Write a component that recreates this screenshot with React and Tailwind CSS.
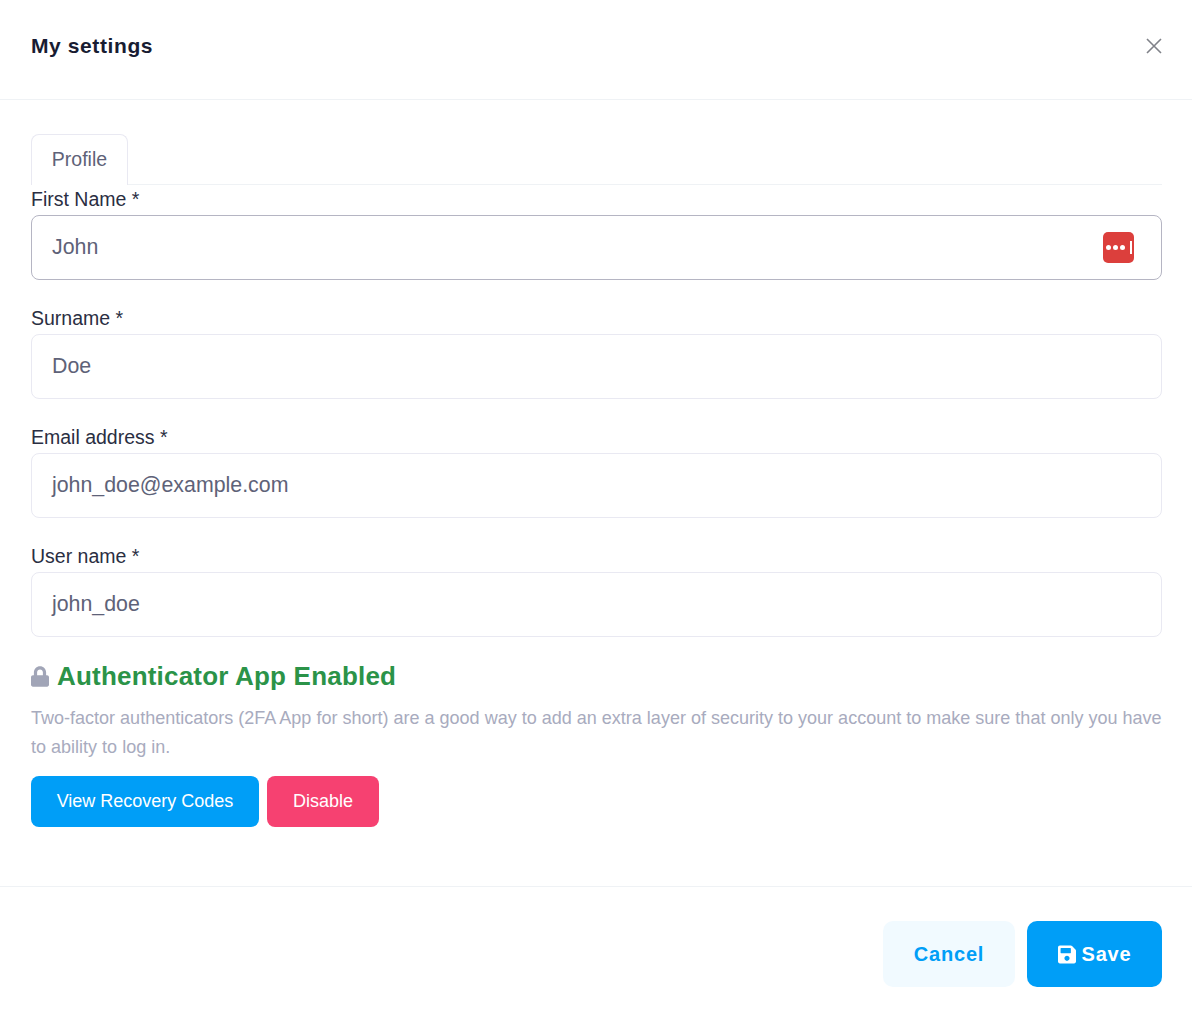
import { FaLock, FaSave } from "react-icons/fa";

const fields = [
  { label: "First Name *", value: "John", focused: true },
  { label: "Surname *", value: "Doe" },
  { label: "Email address *", value: "john_doe@example.com" },
  { label: "User name *", value: "john_doe" },
];

const Field = ({ label, value, focused }) => (
  <div className="mb-[24px] last:mb-[21px]">
    <label className="block h-[30px] text-[19.5px] leading-[28px] text-[#2a2e42]">
      {label}
    </label>
    <div
      className={`flex h-[65px] items-center justify-between rounded-lg border bg-white pr-[27px] pl-5 text-[21.35px] text-[#5e6278] ${
        focused ? "border-[#b5b5c3]" : "border-[#e9e9f2]"
      }`}
    >
      <span className="pb-px">{value}</span>
      {focused && (
        <span className="flex h-[31px] w-[31px] items-center justify-center gap-[2px] rounded-[5px] bg-[#dc3f3c]">
          <span className="h-[5px] w-[5px] rounded-full bg-white" />
          <span className="h-[5px] w-[5px] rounded-full bg-white" />
          <span className="h-[5px] w-[5px] rounded-full bg-white" />
          <span className="ml-[3px] h-[13px] w-[2px] bg-white" />
        </span>
      )}
    </div>
  </div>
);

const App = () => {
  return (
    <div className="h-[1020px] w-[1192px] overflow-hidden bg-white font-['Liberation_Sans',Arial,sans-serif]">
      <div className="flex h-[100px] items-center justify-between border-b border-[#eff2f5] pr-[29px] pb-[7px] pl-[31px]">
        <h2 className="text-[21px] font-bold tracking-[0.6px] text-[#181c32]">My settings</h2>
        <svg width="18" height="18" viewBox="0 0 18 18" fill="none" stroke="#808289" strokeWidth="1.6">
          <path d="M2 2 L16 16 M16 2 L2 16" />
        </svg>
      </div>

      <div className="h-[786px] px-[30px] pt-[34px] pl-[31px]">
        <div className="h-[51px] border-b border-[#eff2f5]">
          <div className="flex h-[51px] w-[97px] items-center justify-center rounded-t-lg border border-b-0 border-[#e9e9f2] bg-white pb-px text-[19.5px] text-[#5e6278]">
            Profile
          </div>
        </div>

        <div>
          {fields.map((f) => (
            <Field key={f.label} {...f} />
          ))}
        </div>

        <div className="flex h-[36px] items-center gap-[8px]">
          <FaLock className="h-[21px] w-[18px] text-[#a1a5b7]" />
          <h3 className="text-[26px] font-bold tracking-[0.2px] text-[#2b9348]">Authenticator App Enabled</h3>
        </div>
        <p className="mt-[10px] text-[18.03px] leading-[29px] text-[#a8abbe]">
          Two-factor authenticators (2FA App for short) are a good way to add an extra layer of security to your account to make sure that only you have to ability to log in.
        </p>
        <div className="mt-[14px] flex gap-2">
          <button className="h-[51px] w-[228px] rounded-lg bg-[#009ef7] text-[18px] text-white">View Recovery Codes</button>
          <button className="h-[51px] w-[112px] rounded-lg bg-[#f64171] text-[18px] text-white">Disable</button>
        </div>
      </div>

      <div className="flex justify-end gap-3 border-t border-[#eff2f5] pt-[34px] pr-[30px]">
        <button className="h-[66px] w-[132px] rounded-[10px] bg-[#f1faff] text-[20px] font-bold tracking-[0.8px] text-[#009ef7]">Cancel</button>
        <button className="flex h-[66px] w-[135px] items-center justify-center gap-[6px] rounded-[10px] bg-[#009ef7] text-[20px] font-bold tracking-[0.8px] text-white">
          <FaSave className="h-[21px] w-[18px]" />
          Save
        </button>
      </div>
    </div>
  );
};

export default App;
